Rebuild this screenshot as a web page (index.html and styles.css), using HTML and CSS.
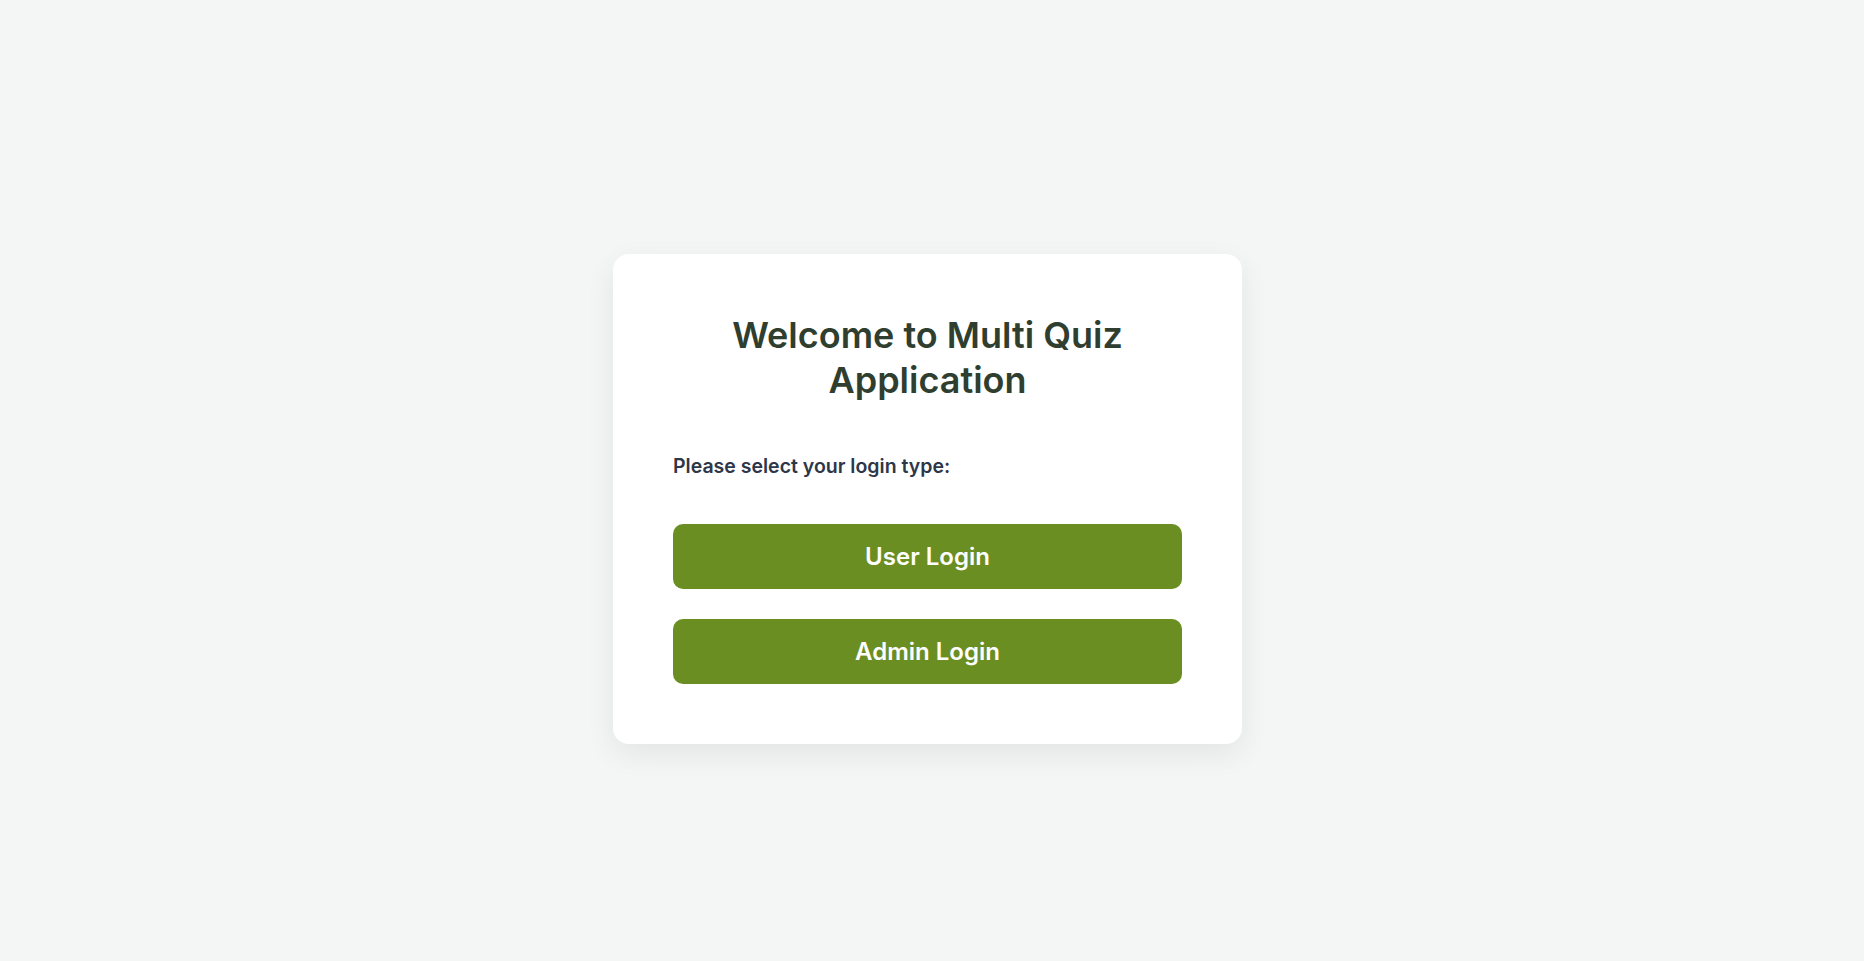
FILE: index.html
```html
<!DOCTYPE html>
<html lang="en">
<head>
<meta charset="utf-8">
<title>Multi Quiz Application</title>
<link rel="stylesheet" href="styles.css">
</head>
<body>
<main class="page">
  <section class="card">
    <h1 class="title">Welcome to Multi Quiz Application</h1>
    <p class="prompt">Please select your login type:</p>
    <div class="actions">
      <button class="btn" type="button">User Login</button>
      <button class="btn" type="button">Admin Login</button>
    </div>
  </section>
</main>
</body>
</html>
```

FILE: styles.css
```css
* { box-sizing: border-box; }
html, body { margin: 0; padding: 0; }
body {
  background: #f4f6f5;
  font-family: Inter, "Noto Sans", "Liberation Sans", sans-serif;
  min-height: 100vh;
}
.page {
  display: flex;
  justify-content: center;
  align-items: flex-start;
  padding: 254px 9px 0 0;
}
.card {
  width: 629px;
  background: #ffffff;
  border-radius: 16px;
  padding: 59px 60px 60px;
  box-shadow: 0 10px 30px rgba(0, 0, 0, 0.07);
}
.title {
  margin: 0;
  font-size: 36px;
  line-height: 45px;
  font-weight: 600;
  color: #2f3e2e;
  text-align: center;
  padding: 0 40px;
}
.prompt {
  margin: 52px 0 0;
  font-size: 19.5px;
  line-height: 23px;
  font-weight: 600;
  color: #2d3748;
}
.actions {
  display: flex;
  flex-direction: column;
  gap: 30px;
  margin-top: 46px;
}
.btn {
  display: block;
  width: 100%;
  height: 65px;
  border: none;
  border-radius: 10px;
  background: #6b8e23;
  color: #ffffff;
  font-family: inherit;
  font-size: 24px;
  font-weight: 600;
  cursor: pointer;
}
```
